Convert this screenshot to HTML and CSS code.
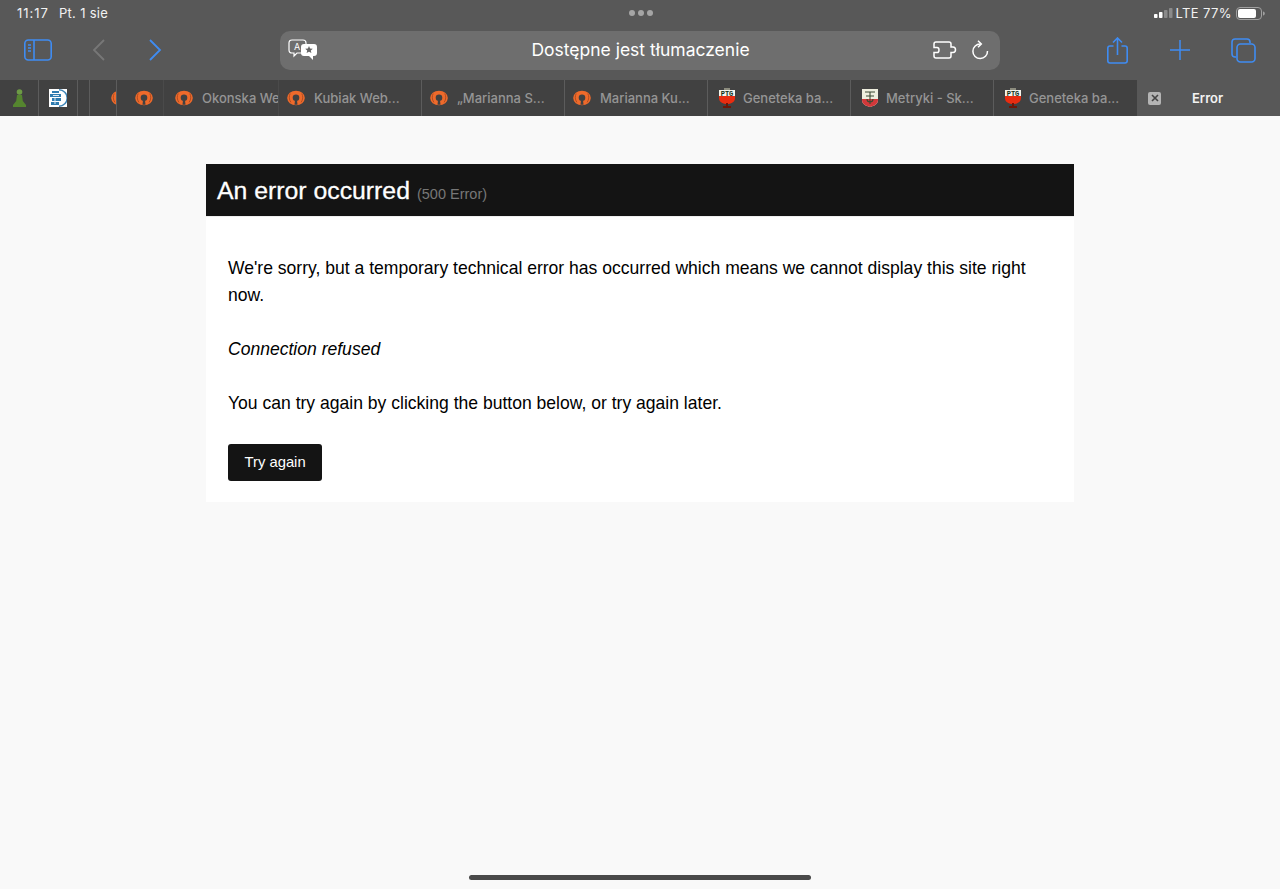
FILE: index.html
```html
<!DOCTYPE html>
<html lang="en">
<head>
  <meta charset="UTF-8">
  <title>Error</title>
  <link rel="stylesheet" href="styles.css">
</head>
<body>
  <svg class="defs" width="0" height="0">
    <symbol id="ring" viewBox="0 0 18 16">
      <ellipse cx="9" cy="8" rx="8.800" ry="7.300" fill="#ee6a2b"/>
      <path d="M3.200 3.600C1.800 6 1.900 9.600 3.900 12.300M14.800 3.600c1.400 2.400 1.300 6-.7 8.700" stroke="#a9491f" stroke-width=".9" fill="none"/>
      <circle cx="9" cy="7.800" r="3.300" fill="#414141"/>
      <path d="M8 10h2l.5 4.800h-3z" fill="#414141"/>
    </symbol>
    <symbol id="ptg" viewBox="0 0 18 20">
      <path d="M6 0h6v2h3v2H3V2h3z" fill="#8c8c7e"/>
      <rect x="1" y="2" width="16" height="7" fill="#f4f4ec"/>
      <text x="9" y="8" class="fav-text">PTG</text>
      <path d="M1 8h16v2c0 3.500-3 6-8 6s-8-2.500-8-6z" fill="#e92c10"/>
      <rect x="8" y="15" width="2" height="4" fill="#6e1608"/>
      <rect x="5" y="18" width="8" height="2" fill="#6e1608"/>
    </symbol>
    <symbol id="ptg2" viewBox="0 0 18 20">
      <path d="M1 1h16v11c0 4-4 6-8 7-4-1-8-3-8-7z" fill="#eeeede"/>
      <path d="M1 11h16v1c0 4-4 6-8 7-4-1-8-3-8-7z" fill="#d2383a"/>
      <path d="M4 4h10M9 4v12M5 8h8M6 11a3 3 0 1 0 6 0" stroke="#3c4a34" stroke-width="1.100" fill="none"/>
    </symbol>
  </svg>

  <div class="chrome">
    <div class="status">
      <div class="status-left"><span>11:17</span><span>Pt. 1 sie</span></div>
      <div class="dots"><i></i><i></i><i></i></div>
      <div class="status-right">
        <svg width="20" height="12" viewBox="0 0 20 12">
          <rect x="0" y="7" width="3.500" height="4" rx=".8" fill="#fff"/>
          <rect x="5" y="5" width="3.500" height="6" rx=".8" fill="#fff"/>
          <rect x="10" y="3" width="3.500" height="8" rx=".8" fill="#8a8a8a"/>
          <rect x="15" y="1" width="3.500" height="10" rx=".8" fill="#8a8a8a"/>
        </svg>
        <span>LTE</span><span>77%</span>
        <svg width="29" height="13" viewBox="0 0 29 13">
          <rect x=".5" y=".5" width="25" height="12" rx="3.500" fill="none" stroke="#a0a0a0"/>
          <rect x="2" y="2" width="18" height="9" rx="2" fill="#fff"/>
          <path d="M27 4.500c1.200.4 1.800 1.100 1.800 2s-.6 1.600-1.800 2z" fill="#a0a0a0"/>
        </svg>
      </div>
    </div>

    <div class="toolbar">
      <div class="tool-left">
        <svg class="tool-sidebar" width="28" height="22" viewBox="0 0 28 22" fill="none" stroke="#3f8cf2" stroke-width="1.600">
          <rect x=".8" y="1" width="26.400" height="20" rx="3.500"/>
          <path d="M10 1v20"/>
          <path d="M4 6h3M4 9h3M4 12h3" stroke-width="1.300"/>
        </svg>
        <svg class="tool-back" width="14" height="22" viewBox="0 0 14 22" fill="none" stroke="#777" stroke-width="1.800">
          <path d="M12 1 2 11l10 10"/>
        </svg>
        <svg class="tool-forward" width="14" height="22" viewBox="0 0 14 22" fill="none" stroke="#3f8cf2" stroke-width="1.800">
          <path d="m2 1 10 10L2 21"/>
        </svg>
      </div>

      <div class="urlbar">
        <svg width="30" height="22" viewBox="0 0 30 22">
          <path d="M4 1h11c2 0 3 1 3 3v7c0 2-1 3-3 3H9l-3 3v-3H4c-2 0-3-1-3-3V4c0-2 1-3 3-3z" fill="#6e6e6e" stroke="#fff" stroke-width="1.200"/>
          <text x="6" y="11" class="glyph">A</text>
          <path d="M16 5h10c2 0 3 1 3 3v6c0 2-1 3-3 3h-1v4l-4-4h-5c-2 0-3-1-3-3V8c0-2 1-3 3-3z" fill="#fff"/>
          <path d="m21 7 1.100 2.500 2.700.2-2 1.800.6 2.600-2.400-1.400-2.400 1.400.6-2.600-2-1.800 2.700-.2z" fill="#666"/>
        </svg>
        <span class="url-text">Dostępne jest tłumaczenie</span>
        <svg class="url-ext" width="24" height="18" viewBox="0 0 24 18" fill="none" stroke="#fff" stroke-width="1.500">
          <path d="M3 1h13c1.200 0 2 .8 2 2v3h2c1.400 0 2.500 1.200 2.500 2.800S21.400 11.500 20 11.500h-2V15c0 1.200-.8 2-2 2H3c-1.200 0-2-.8-2-2v-3.500h3c1.200 0 2-1.100 2-2.600S5.200 6.500 4 6.500H1V3c0-1.200.8-2 2-2z"/>
        </svg>
        <svg class="url-reload" width="18" height="20" viewBox="0 0 18 20" fill="none" stroke="#fff" stroke-width="1.500">
          <path d="M9.500 4A7.300 7.300 0 1 0 16.500 11"/>
          <path d="m7 .8 3.300 3.200L7 7.200"/>
        </svg>
      </div>

      <div class="tool-right">
        <svg width="21" height="27" viewBox="0 0 21 27" fill="none" stroke="#3f8cf2" stroke-width="1.600">
          <path d="M6.500 9H3c-1.300 0-2.200.9-2.200 2.200v12.600C.8 25.100 1.700 26 3 26h15c1.300 0 2.200-.9 2.200-2.200V11.200C20.200 9.900 19.300 9 18 9h-3.500"/>
          <path d="M10.500 18V1.500M6 5.500l4.500-4.500L15 5.500"/>
        </svg>
        <svg width="20" height="20" viewBox="0 0 20 20" fill="none" stroke="#3f8cf2" stroke-width="1.500">
          <path d="M0 10h20M10 0v20"/>
        </svg>
        <svg width="25" height="25" viewBox="0 0 25 25" fill="none" stroke="#3f8cf2" stroke-width="1.600">
          <path d="M5 19H4c-1.800 0-3-1.200-3-3V4c0-1.800 1.200-3 3-3h12c1.800 0 3 1.200 3 3v1"/>
          <rect x="6" y="6" width="18" height="18" rx="3.500"/>
        </svg>
      </div>
    </div>

    <div class="tabs">
      <div class="tab">
        <svg class="favicon" width="15" height="20" viewBox="0 0 15 20">
          <circle cx="7.500" cy="4" r="2.800" fill="#6d9b45"/>
          <path d="M5 7h5l.8 6 3.200 4v2H1v-2l3.200-4z" fill="#55852f"/>
        </svg>
      </div>
      <div class="tab">
        <svg class="favicon" width="18" height="18" viewBox="0 0 18 18">
          <rect width="18" height="18" fill="#fff"/>
          <path d="M10 .8A8.200 8.200 0 0 1 10 17.200" fill="none" stroke="#3f86b8" stroke-width="1.500"/>
          <path d="M3 2h7v2H3zM1 5h11v3H1zM3 9h9v3H3zM2 13h8v3H2z" fill="#2f7cb0"/>
          <path d="M4 6.500h6M6 9v6" stroke="#dfeaf2"/>
        </svg>
      </div>
      <div class="tab"></div>
      <div class="tab tab-clipped"><svg class="favicon" width="18" height="16"><use href="#ring"/></svg></div>
      <div class="tab tab-icon"><svg class="favicon" width="18" height="16"><use href="#ring"/></svg></div>
      <div class="tab tab-cut"><svg class="favicon" width="18" height="16"><use href="#ring"/></svg><span class="tab-label">Okonska Web</span></div>
      <div class="tab"><svg class="favicon" width="18" height="16"><use href="#ring"/></svg><span class="tab-label">Kubiak Web...</span></div>
      <div class="tab"><svg class="favicon" width="18" height="16"><use href="#ring"/></svg><span class="tab-label">„Marianna S...</span></div>
      <div class="tab"><svg class="favicon" width="18" height="16"><use href="#ring"/></svg><span class="tab-label">Marianna Ku...</span></div>
      <div class="tab tab-ptg"><svg class="favicon" width="18" height="20"><use href="#ptg"/></svg><span class="tab-label">Geneteka ba...</span></div>
      <div class="tab tab-ptg"><svg class="favicon" width="18" height="20"><use href="#ptg2"/></svg><span class="tab-label">Metryki - Sk...</span></div>
      <div class="tab tab-ptg tab-last"><svg class="favicon" width="18" height="20"><use href="#ptg"/></svg><span class="tab-label">Geneteka ba...</span></div>
      <div class="tab tab-active">
        <span class="tab-close">
          <svg width="8" height="8" viewBox="0 0 8 8" stroke="#444" stroke-width="1.600"><path d="m1 1 6 6M7 1 1 7"/></svg>
        </span>
        <span class="tab-title">Error</span>
      </div>
    </div>
  </div>

  <main class="page">
    <div class="card">
      <div class="card-head">
        <h1>An error occurred</h1>
        <small>(500 Error)</small>
      </div>
      <div class="card-body">
        <p>We're sorry, but a temporary technical error has occurred which means we cannot display this site right now.</p>
        <p><em>Connection refused</em></p>
        <p>You can try again by clicking the button below, or try again later.</p>
        <a class="btn" href="#">Try again</a>
      </div>
    </div>
  </main>

  <div class="home-bar"></div>
</body>
</html>
```

FILE: styles.css
```css
html, body {
  height: 100%;
}
body {
  margin: 0;
  display: flex;
  flex-direction: column;
  overflow: hidden;
  background: #f9f9f9;
  color: #000;
  font-family: "Liberation Sans", Arial, sans-serif;
}
.defs {
  position: absolute;
}
.fav-text {
  fill: #12301a;
  font-size: 7px;
  font-weight: bold;
  text-anchor: middle;
  font-family: "Liberation Mono", monospace;
}

/* browser chrome */
.chrome {
  height: 116px;
  flex: none;
  display: flex;
  flex-direction: column;
  background: #585858;
  font-family: Inter, "Noto Sans", sans-serif;
}
.status {
  height: 25px;
  padding: 1px 15px 0 17px;
  display: grid;
  grid-template-columns: 1fr auto 1fr;
  align-items: center;
  color: #f2f2f2;
  font-size: 13px;
}
.status-left {
  display: flex;
  gap: 10px;
  letter-spacing: .3px;
}
.status-left span:first-child {
  letter-spacing: 1px;
}
.status-right {
  display: flex;
  justify-content: flex-end;
  align-items: center;
  gap: 4px;
  letter-spacing: .4px;
}
.status-right svg:first-child {
  margin-right: -2px;
}
.dots {
  display: flex;
  gap: 3px;
}
.dots i {
  width: 6px;
  height: 6px;
  border-radius: 50%;
  background: #a5a5a5;
}

.toolbar {
  height: 55px;
  display: grid;
  grid-template-columns: 280px 720px 280px;
  align-items: center;
}
.tool-left {
  padding: 0 0 6px 24px;
  display: flex;
  align-items: center;
}
.tool-back {
  margin-left: 40px;
}
.tool-forward {
  margin-left: 42px;
}
.urlbar {
  height: 39px;
  margin-bottom: 6px;
  padding: 0 11px 0 8px;
  display: flex;
  align-items: center;
  border-radius: 10px;
  background: #6e6e6e;
  color: #fff;
}
.url-text {
  flex: 1;
  text-align: center;
  font-size: 17.5px;
  padding: 0 0 2px 26px;
}
.url-ext {
  margin-right: 14px;
  margin-left: -4px;
}
.glyph {
  fill: #fff;
  font-size: 9px;
  font-family: Inter, sans-serif;
}
.tool-right {
  padding: 0 24px 6px 107px;
  display: flex;
  align-items: center;
  justify-content: space-between;
}

.tabs {
  height: 36px;
  display: grid;
  grid-template-columns: 39px 39px 12px 27px 47px 115px 143px 143px 143px 143px 143px 143px 143px;
  background: #414141;
}
.tab {
  min-width: 0;
  display: flex;
  align-items: center;
  gap: 8px;
  padding-left: 8px;
  overflow: hidden;
  white-space: nowrap;
  border-right: 1px solid #5c5c5c;
  color: #959595;
  font-size: 13px;
  font-weight: 500;
}
.tab .favicon {
  flex: none;
}
.tab:nth-child(1) {
  padding-left: 12px;
}
.tab:nth-child(2) {
  padding-left: 10px;
}
.tab-clipped {
  padding-left: 21px;
}
.tab-icon {
  padding-left: 18px;
  border-right-color: #4a4a4a;
}
.tab-cut {
  padding-left: 11px;
  border-right-color: #4a4a4a;
}
.tab-label {
  padding-left: 1px;
}
.tab-ptg {
  padding-left: 10px;
  gap: 7px;
}
.tab-ptg .tab-label {
  padding-left: 0;
}
.tab-last {
  border-right: 0;
}
.tab.tab-active {
  padding-left: 11px;
  background: #585858;
  color: #f2f2f2;
  border-right: 0;
  font-weight: 600;
}
.tab-close {
  width: 13px;
  height: 13px;
  flex: none;
  display: flex;
  align-items: center;
  justify-content: center;
  border-radius: 2px;
  background: #b4b4b4;
}
.tab-title {
  padding-left: 23px;
}

/* page content */
.page {
  flex: 1;
  padding-top: 48px;
}
.card {
  width: 868px;
  margin: 0 auto;
  background: #fff;
}
.card-head {
  height: 53px;
  padding-left: 11px;
  display: flex;
  align-items: baseline;
  gap: 7px;
  background: #141414;
  border-bottom: 1px solid #eee;
  box-sizing: border-box;
  color: #fff;
}
.card-head h1 {
  margin: 0;
  font-size: 24.8px;
  font-weight: normal;
  line-height: 53px;
  -webkit-text-stroke: .3px #fff;
}
.card-head small {
  font-size: 14.5px;
  color: #777;
}
.card-body {
  padding: 38px 22px 21px;
  font-size: 17.56px;
  line-height: 27px;
}
.card-body p {
  margin: 0 0 27px;
}
.btn {
  display: block;
  width: max-content;
  padding: 0 16.500px;
  height: 37px;
  line-height: 37px;
  border-radius: 3px;
  background: #141414;
  color: #fff;
  font-size: 14.8px;
  text-decoration: none;
}

.home-bar {
  position: absolute;
  left: 469px;
  top: 875px;
  width: 342px;
  height: 5px;
  border-radius: 3px;
  background: #4a4a4a;
}
```
